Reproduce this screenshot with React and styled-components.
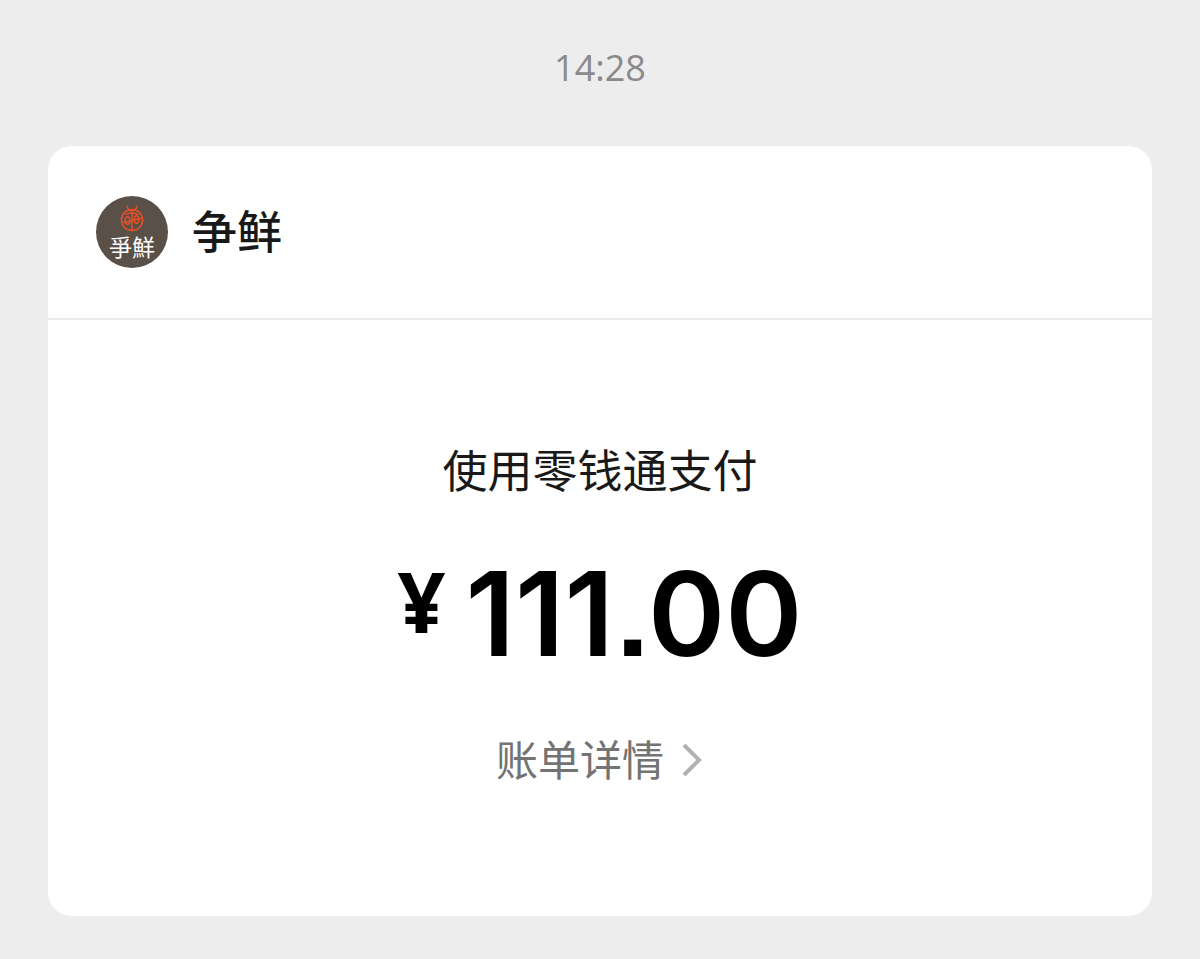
import styled, { createGlobalStyle } from "styled-components";

const GlobalStyle = createGlobalStyle`
  * {
    box-sizing: border-box;
  }

  body {
    margin: 0;
    background: #ededed;
    font-family: "Noto Sans CJK SC", sans-serif;
  }
`;

const Page = styled.main`
  padding: 40px 48px;
`;

const Time = styled.time`
  display: block;
  margin-bottom: 50px;
  text-align: center;
  font-family: "Open Sans", "Noto Sans CJK SC", sans-serif;
  font-size: 36px;
  line-height: 56px;
  color: #8a8a8a;
`;

const Card = styled.article`
  background: #fff;
  border-radius: 24px;
`;

const Header = styled.header`
  display: flex;
  align-items: center;
  gap: 24px;
  padding: 50px 48px;
  border-bottom: 2px solid #ebebeb;
`;

const Logo = styled.svg`
  width: 72px;
  height: 72px;
`;

const LogoText = styled.text`
  font-family: "Noto Sans CJK TC", sans-serif;
  font-size: 23px;
  font-weight: 400;
  fill: #fff;
`;

const Merchant = styled.h1`
  margin: 0;
  padding-bottom: 4px;
  font-size: 45px;
  font-weight: 500;
  line-height: 64px;
  color: #191919;
`;

const Body = styled.section`
  display: flex;
  flex-direction: column;
  align-items: center;
  padding: 117px 48px 128px;
`;

const Method = styled.p`
  margin: 0 0 52px;
  font-size: 45px;
  line-height: 64px;
  color: #191919;
`;

const Amount = styled.p`
  display: flex;
  align-items: flex-start;
  gap: 20px;
  margin: 0 0 57px;
  font-family: Inter, "Noto Sans CJK SC", sans-serif;
  font-size: 117px;
  font-weight: 600;
  font-feature-settings: "ss07";
  line-height: 122px;
  color: #000;
`;

const Currency = styled.span`
  font-family: "Open Sans", "Noto Sans CJK SC", sans-serif;
  font-size: 84px;
  font-weight: 700;
  line-height: 96px;
`;

const DetailLink = styled.a`
  display: flex;
  align-items: center;
  gap: 16px;
  font-size: 42px;
  line-height: 52px;
  color: #737373;
  text-decoration: none;
`;

const DetailLabel = styled.span`
  padding-bottom: 4px;
`;

const Chevron = styled.svg`
  width: 24px;
  height: 36px;
  fill: none;
  stroke: #b2b2b2;
  stroke-width: 4;
`;

const MerchantLogo = () => (
  <Logo viewBox="0 0 72 72" aria-hidden="true">
    <circle cx="36" cy="36" r="36" fill="#5a5048" />
    <g fill="none" stroke="#e8502a" strokeWidth="1.5">
      <circle cx="36" cy="24" r="10.6" />
      <path d="M31 9.800C31.500 12.500 33 14.500 36 14.800C39 14.500 40.500 12.500 41 9.800" />
      <path d="M29.500 18.500L36 16.500L42.500 18.500" />
      <path d="M36 16.500V34M27 26.500L45 22.500" />
      <ellipse cx="31.500" cy="24.500" rx="2.300" ry="3.800" />
      <ellipse cx="40.500" cy="23.500" rx="2.300" ry="3.800" />
    </g>
    <LogoText x="36" y="60" textAnchor="middle">爭鮮</LogoText>
  </Logo>
);

const App = () => {
  return (
    <>
      <GlobalStyle />
      <Page>
        <Time>14:28</Time>
        <Card>
          <Header>
            <MerchantLogo />
            <Merchant>争鲜</Merchant>
          </Header>
          <Body>
            <Method>使用零钱通支付</Method>
            <Amount>
              <Currency>¥</Currency>
              <span>111.00</span>
            </Amount>
            <DetailLink href="#bill">
              <DetailLabel>账单详情</DetailLabel>
              <Chevron viewBox="0 0 24 36" aria-hidden="true">
                <path d="M4 3L19 18L4 33" />
              </Chevron>
            </DetailLink>
          </Body>
        </Card>
      </Page>
    </>
  );
};

export default App;
